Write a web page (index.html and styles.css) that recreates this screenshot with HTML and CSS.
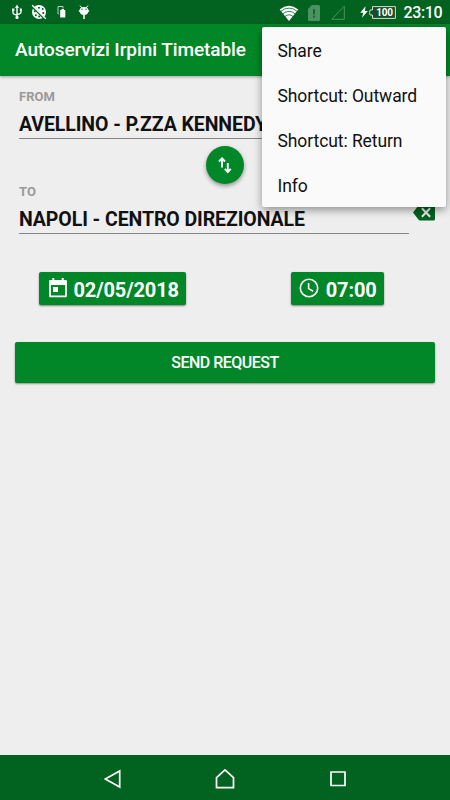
FILE: index.html
```html
<!DOCTYPE html>
<html lang="en">
<head>
<meta charset="utf-8">
<title>Autoservizi Irpini Timetable</title>
<link rel="stylesheet" href="styles.css">
</head>
<body>
<div class="screen">
  <header class="status">
    <div class="notifications">
      <svg width="12" height="16" viewBox="0 0 12 16" fill="none" stroke="#fff" stroke-width="1.4"><path d="M6 2v11M2 6v2.5q0 2 4 2.5M10 6v2q0 2-4 2.5"/><path d="M6 .5 8 4H4zM1 4.5h2.4v2.4H1zM8.8 4.5h2v2.2h-2z" fill="#fff" stroke="none"/><circle cx="6" cy="13.4" r="1.6" fill="#fff" stroke="none"/></svg>
      <svg width="16" height="16" viewBox="0 0 16 16"><circle cx="8" cy="8" r="7" fill="#fff"/><g fill="#01631f"><circle cx="8" cy="3.8" r="1"/><circle cx="11.7" cy="5" r="1"/><circle cx="12.3" cy="9" r="1"/><circle cx="3.8" cy="7.3" r="1"/><circle cx="4.9" cy="11.2" r="1"/><circle cx="8.2" cy="12.4" r="1"/></g><path d="M1.800 2.800 13 14" stroke="#01631f" stroke-width="2.400"/><path d="M1.200 1.200 14.800 14.800" stroke="#fff" stroke-width="1.400"/></svg>
      <svg width="10" height="14" viewBox="0 0 10 14"><path d="M2 8.800H1V1.500h5v2" fill="none" stroke="#b7d2bd"/><path d="M3.200 5h1.300V4h2.500v1h1.300v7.500H3.200z" fill="#fff"/></svg>
      <svg width="12" height="16" viewBox="0 0 12 16"><path d="M2 1.500 4 4M10 1.500 8 4" stroke="#fff"/><path d="M1.500 6.500C1.500 1.900 10.500 1.900 10.500 6.500 10.500 9.600 8.500 11.100 6 11.100S1.500 9.600 1.500 6.500M5.300 10h1.500v5H5.300z" fill="#fff"/><path d="M.8 7h10.400" stroke="#fff" stroke-width="1.300"/><circle cx="4" cy="5.300" r=".7" fill="#01631f"/><circle cx="8" cy="5.300" r=".7" fill="#01631f"/></svg>
    </div>
    <svg class="wifi" width="20" height="16" viewBox="0 0 20 16"><path d="M10 16 .7 4.400Q10-2.800 19.300 4.400z" fill="#fff"/><path d="M1.500 6.500Q10-.3 18.500 6.500M3.500 9Q10 3.700 16.500 9M5.800 11.600Q10 8 14.200 11.600" fill="none" stroke="#01631f" stroke-width=".8"/></svg>
    <svg class="sim" width="12" height="16" viewBox="0 0 12 16"><path d="M4 0h6.500q1.500 0 1.500 1.500v13q0 1.500-1.500 1.500h-9Q0 16 0 14.500V4z" fill="#4c9160"/><path d="M6 4.300v5M6 10.500v2" stroke="#01631f" stroke-width="1.600"/></svg>
    <svg class="signal" width="14" height="15" viewBox="0 0 14 15"><path d="M13.300 1v13.300H.9z" fill="none" stroke="#4c9160"/></svg>
    <svg class="bolt" width="8" height="12" viewBox="0 0 8 12"><path d="M5.500.3.3 6.700h3L2 11.700 7.800 5H4.900z" fill="#fff"/></svg>
    <div class="battery"><svg width="27" height="13" viewBox="0 0 27 13"><path d="M3.500.6h22.900v11.800H3.500V9H1Q.2 6.500 1 4h2.500z" fill="#174c25" stroke="#d0dfd3"/></svg><span>100</span></div>
    <time class="clock">23:10</time>
  </header>
  <div class="toolbar"><h1>Autoservizi Irpini Timetable</h1></div>
  <main>
    <section class="field">
      <label>FROM</label>
      <div class="value from">AVELLINO - P.ZZA KENNEDY</div>
    </section>
    <button class="swap" aria-label="Swap"><svg width="14" height="18" viewBox="0 0 14 18"><path d="M4 11.500V3M1 5.500 4 2.300 7 5.500M9.800 7v8M6.800 12.800 9.800 16 12.800 12.800" fill="none" stroke="#fff" stroke-width="1.900"/></svg></button>
    <section class="field">
      <label>TO</label>
      <div class="value to">NAPOLI - CENTRO DIREZIONALE</div>
      <svg class="clear" width="23" height="17" viewBox="0 0 23 17"><path d="M7 .5h13.500q1.500 0 1.500 1.500v13q0 1.500-1.500 1.500H7q-1 0-1.600-1L0 8.500l5.400-7Q6 .5 7 .5" fill="#03631f"/><path d="m8.900 4.300 8.200 8.400m0-8.400-8.200 8.400" stroke="#eee" stroke-width="2"/></svg>
    </section>
    <div class="when">
      <button class="date"><svg width="18" height="20" viewBox="0 0 18 20"><path d="M1 3h16v15.300H1z" fill="none" stroke="#fff" stroke-width="1.800" stroke-linejoin="round"/><path d="M1 2h16v5H1zM3.300 0h2v3h-2zM12.700 0h2v3h-2zM4 9h5v5H4z" fill="#fff"/></svg><span>02/05/2018</span></button>
      <button class="time"><svg width="20" height="20" viewBox="0 0 20 20" fill="none" stroke="#fff" stroke-width="1.600"><circle cx="10" cy="10" r="8.700"/><path d="M9.600 5v5.600l4.500 2.700"/></svg><span>07:00</span></button>
    </div>
    <button class="send"><span>SEND REQUEST</span></button>
  </main>
  <nav class="menu"><a>Share</a><a>Shortcut: Outward</a><a>Shortcut: Return</a><a>Info</a></nav>
  <footer>
    <svg width="18" height="20" viewBox="0 0 18 20"><path d="M15.700 2v16L1.200 10z"/></svg>
    <svg width="20" height="20" viewBox="0 0 20 20"><path d="M1.500 8.600 10 .9l8.500 7.700v10H1.500z"/></svg>
    <svg width="18" height="18" viewBox="0 0 18 18"><path d="M2 2h14v13.500H2z"/></svg>
  </footer>
</div>
</body>
</html>
```
FILE: styles.css
```css
* { box-sizing: border-box; }
body { margin: 0; font-family: Roboto, sans-serif; color: #111; }
svg { display: block; flex: none; }
button { border: 0; padding: 0; font-family: inherit; color: #fff; background: #018728; }
.screen { position: relative; width: 450px; height: 800px; display: flex; flex-direction: column; background: #eee; overflow: hidden; }
.status { height: 24px; flex: none; display: flex; align-items: center; background: #01631f; color: #fff; padding-right: 7px; }
.notifications { display: flex; align-items: center; gap: 11px; margin: 0 auto 0 11px; }
.notifications svg:nth-child(2) { margin-left: -3px; }
.notifications svg:nth-child(3) { margin-left: -1px; }
.wifi, .sim, .signal { margin-top: 1px; }
.sim { margin-left: 9px; }
.signal { margin-left: 11px; }
.bolt { margin-left: 15px; }
.battery { position: relative; margin-left: 1px; }
.battery span { position: absolute; inset: 0 0 0 4px; text-align: center; font-size: 10px; line-height: 13px; font-weight: 700; letter-spacing: -.3px; }
.clock { margin-left: 7.500px; width: 39.500px; font-size: 16px; line-height: 24px; padding-top: 1px; font-weight: 500; letter-spacing: -.4px; white-space: nowrap; }
.toolbar { height: 52px; flex: none; display: flex; align-items: center; padding: 0 15px; background: #018728; box-shadow: 0 1px 3px #0005; }
h1 { margin: 0; font-size: 19px; line-height: 22px; font-weight: 500; letter-spacing: -.07px; color: #fff; white-space: nowrap; }
main { flex: 1; padding: 12px 15px 0; }
.field { position: relative; height: 51px; padding-left: 4px; }
label { display: block; font-size: 13px; line-height: 17px; height: 16px; font-weight: 700; color: #999; }
.value { width: 390px; height: 35px; border-bottom: 1px solid #858585; font-size: 19.500px; line-height: 41px; font-weight: 700; letter-spacing: -.08px; white-space: nowrap; }
.clear { position: absolute; left: 398px; top: 21px; }
.swap { display: grid; place-items: center; width: 38px; height: 38px; border-radius: 50%; margin: 7px 0 -1px 191px; box-shadow: 0 2px 4px #0006; }
.when { display: flex; justify-content: space-between; margin: 38px 51px 0 24px; }
.when button { height: 33px; display: flex; align-items: center; border-radius: 2px; box-shadow: 0 1px 2px #0007; font-size: 20px; font-weight: 700; letter-spacing: -.13px; white-space: nowrap; }
.when span { padding-top: 2px; }
.when svg { margin-top: -1px; }
.date { width: 147px; padding-left: 9.500px; gap: 7px; }
.time { width: 93px; padding-left: 8px; gap: 6.700px; }
.send { display: block; width: 420px; height: 41px; margin-top: 37px; border-radius: 2px; box-shadow: 0 1px 2px #0006; font-size: 16px; font-weight: 500; letter-spacing: -.5px; }
.menu { position: absolute; left: 262px; top: 27px; width: 184px; height: 180px; border-radius: 2px; background: #fafafa; box-shadow: 0 3px 8px #0006; }
.menu a { display: block; height: 45px; line-height: 49px; padding-left: 15.500px; font-size: 17.500px; letter-spacing: -.08px; white-space: nowrap; }
footer { height: 45px; display: flex; align-items: center; justify-content: space-between; padding: 3px 103px 0 103.500px; background: #01631f; }
footer path { fill: none; stroke: #fff; stroke-width: 1.700; }
```
